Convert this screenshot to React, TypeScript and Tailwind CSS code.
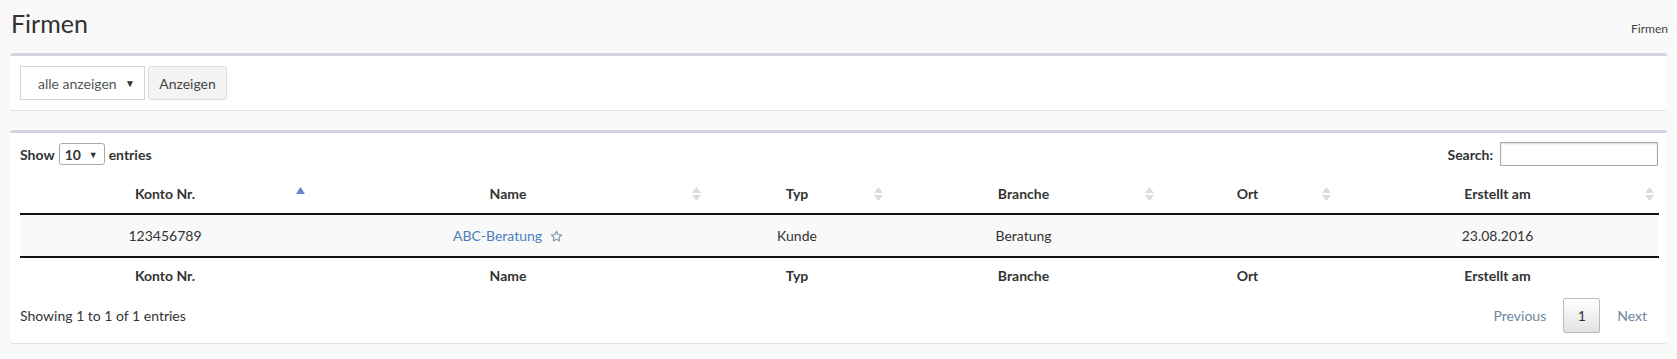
import React from "react";

const font = { fontFamily: '"Lato", "Open Sans", sans-serif' };

function SortBoth() {
  return (
    <svg width="9" height="14" viewBox="0 0 9 14" className="absolute right-[5px] top-1/2 -translate-y-1/2">
      <path d="M4.5 0 L9 6 L0 6 Z" fill="#dcdcdc" />
      <path d="M0 8 L9 8 L4.5 14 Z" fill="#dcdcdc" />
    </svg>
  );
}

function SortAsc() {
  return (
    <svg width="9" height="7" viewBox="0 0 9 7" className="absolute right-[5px] top-[12px]">
      <path d="M4.5 0 L9 7 L0 7 Z" fill="#6f7fd6" />
    </svg>
  );
}

function Star() {
  return (
    <svg width="13" height="13" viewBox="0 0 24 24" className="inline-block ml-[8px] -mt-[2px]" fill="none" stroke="#8d9bb0" strokeWidth="2.2" strokeLinejoin="round">
      <path d="M12 2.5l2.9 6.1 6.6.8-4.9 4.5 1.3 6.6L12 17.2l-5.9 3.3 1.3-6.6-4.9-4.5 6.6-.8z" />
    </svg>
  );
}

const cols = [
  { name: "Konto Nr.", w: "w-[290px]" },
  { name: "Name", w: "w-[396px]" },
  { name: "Typ", w: "w-[182px]" },
  { name: "Branche", w: "w-[271px]" },
  { name: "Ort", w: "w-[177px]" },
  { name: "Erstellt am", w: "w-[323px]" },
];

export default function App() {
  return (
    <div className="min-h-[359px] bg-[#f9f9f9] text-[#333] text-[14px]" style={font}>
      <div className="flex items-start justify-between pl-[11px] pr-[9px] pt-[8px] h-[53px]">
        <h1 className="text-[25px] leading-[30px] text-[#333] font-normal">Firmen</h1>
        <div className="text-[12px] text-[#444] mt-[12px]">Firmen</div>
      </div>

      <div className="mx-[10px] bg-white border-t-[3px] border-[#d2d6de] rounded-[3px] shadow-[0_1px_1px_rgba(0,0,0,0.1)] p-[10px] flex gap-[3px]">
        <div className="relative w-[125px] h-[34px] border border-[#d2d6de] flex items-center pl-[17px] text-[14px] text-[#555]">
          alle anzeigen
          <span className="absolute right-[9px] top-[9px] text-[10px] text-[#333]">▼</span>
        </div>
        <div className="w-[79px] h-[34px] bg-[#f4f4f4] border border-[#ddd] rounded-[3px] flex items-center justify-center text-[14px] text-[#444]">
          Anzeigen
        </div>
      </div>

      <div className="mx-[10px] mt-[20px] bg-white border-t-[3px] border-[#d2d6de] rounded-[3px] shadow-[0_1px_1px_rgba(0,0,0,0.1)] p-[10px]">
        <div className="flex items-center justify-between h-[22px]">
          <div className="flex items-center font-bold text-[14px]">
            <span>Show</span>
            <div className="relative mx-[4px] w-[46px] h-[22px] border border-[#aaa] rounded-[3px] flex items-center pl-[5px]">
              10
              <span className="absolute right-[6px] top-[4px] text-[9px] font-normal">▼</span>
            </div>
            <span>entries</span>
          </div>
          <div className="flex items-center font-bold text-[14px]">
            <span>Search:</span>
            <div className="ml-[7px] mr-[-1px] w-[158px] h-[24px] border border-[#aaa] shadow-[inset_0_1px_2px_rgba(0,0,0,0.15)]" />
          </div>
        </div>

        <table className="mt-[10px] w-[1639px] table-fixed border-collapse">
          <thead>
            <tr className="border-b-2 border-[#111]">
              {cols.map((c, i) => (
                <th key={c.name} className={`${c.w} relative h-[39px] text-center font-bold text-[14px] leading-[18px]`}>
                  {c.name}
                  {i === 0 ? <SortAsc /> : <SortBoth />}
                </th>
              ))}
            </tr>
          </thead>
          <tbody>
            <tr className="bg-[#f9f9f9] h-[43px] text-center">
              <td>123456789</td>
              <td>
                <span className="text-[#4a80c0]">ABC-Beratung</span>
                <Star />
              </td>
              <td>Kunde</td>
              <td>Beratung</td>
              <td></td>
              <td>23.08.2016</td>
            </tr>
          </tbody>
          <tfoot>
            <tr className="border-t-2 border-[#111]">
              {cols.map((c) => (
                <th key={c.name} className="h-[41px] pb-[6px] text-center font-bold">
                  {c.name}
                </th>
              ))}
            </tr>
          </tfoot>
        </table>

        <div className="flex items-center justify-between h-[35px] w-[1639px]">
          <div className="text-[14px]">Showing 1 to 1 of 1 entries</div>
          <div className="flex items-center h-[35px] text-[14px] text-[#6f86a0]">
            <span className="px-[15px]">Previous</span>
            <span className="w-[37px] h-[35px] border border-[#bbb] rounded-[2px] bg-gradient-to-b from-white to-[#e2e2e2] flex items-center justify-center text-[#333] mx-[2px]">1</span>
            <span className="pl-[15px] pr-[12px]">Next</span>
          </div>
        </div>
      </div>
    </div>
  );
}
